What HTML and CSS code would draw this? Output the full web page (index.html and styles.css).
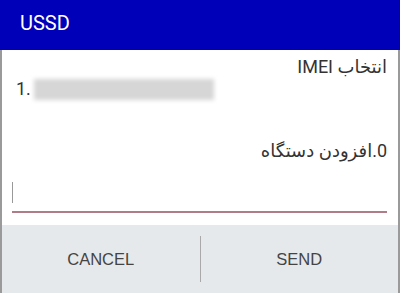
FILE: index.html
```html
<!DOCTYPE html>
<html lang="en">
<head>
  <meta charset="UTF-8">
  <title>USSD</title>
  <link rel="stylesheet" href="styles.css">
</head>
<body>
  <div class="dialog">
    <div class="title-bar">USSD</div>

    <div class="message">
      <div class="line rtl">انتخاب IMEI</div>
      <div class="line item">
        <span class="num">1.</span>
        <span class="hidden-value"></span>
      </div>
      <div class="line rtl option">0.افزودن دستگاه</div>
    </div>

    <div class="input-row">
      <div class="caret"></div>
    </div>

    <div class="buttons">
      <button>CANCEL</button>
      <div class="divider"></div>
      <button>SEND</button>
    </div>
  </div>
</body>
</html>
```

FILE: styles.css
```css
* {
  box-sizing: border-box;
}

body {
  margin: 0;
  font-family: Roboto, "DejaVu Sans", sans-serif;
  background: #fff;
}

.dialog {
  width: 400px;
  height: 293px;
  display: flex;
  flex-direction: column;
  border-left: 2px solid #9a9a9a;
  border-right: 2px solid #9a9a9a;
  background: #fff;
}

.title-bar {
  height: 50px;
  background: #0000b9;
  color: #fff;
  font-size: 20px;
  padding: 11px 0 0 20px;
  margin: 0 -2px;
}

.message {
  padding: 6px 11px 0 12px;
  color: #333;
  font-size: 18px;
}

.line {
  height: 22px;
  line-height: 22px;
}

.rtl {
  direction: rtl;
  text-align: right;
}

.item {
  display: flex;
  align-items: center;
}

.num {
  font-size: 18px;
  width: 20px;
  padding-left: 2px;
}

.hidden-value {
  display: block;
  width: 180px;
  height: 21px;
  background: #d6d6d6;
  filter: blur(2px);
}

.option {
  margin-top: 40px;
}

.input-row {
  margin: 18px 11px 0 10px;
  height: 33px;
  border-bottom: 2px solid #b07c88;
  padding-top: 2px;
}

.caret {
  width: 1px;
  height: 21px;
  background: #999;
}

.buttons {
  margin-top: 12px;
  flex: 1;
  background: #e6e9ec;
  display: flex;
  align-items: center;
}

.buttons button {
  flex: 1;
  height: 100%;
  border: none;
  background: none;
  font-family: "Liberation Sans", sans-serif;
  font-size: 16.5px;
  color: #444;
  padding: 0;
}

.divider {
  width: 1px;
  height: 46px;
  background: #a9a9a9;
}
```
